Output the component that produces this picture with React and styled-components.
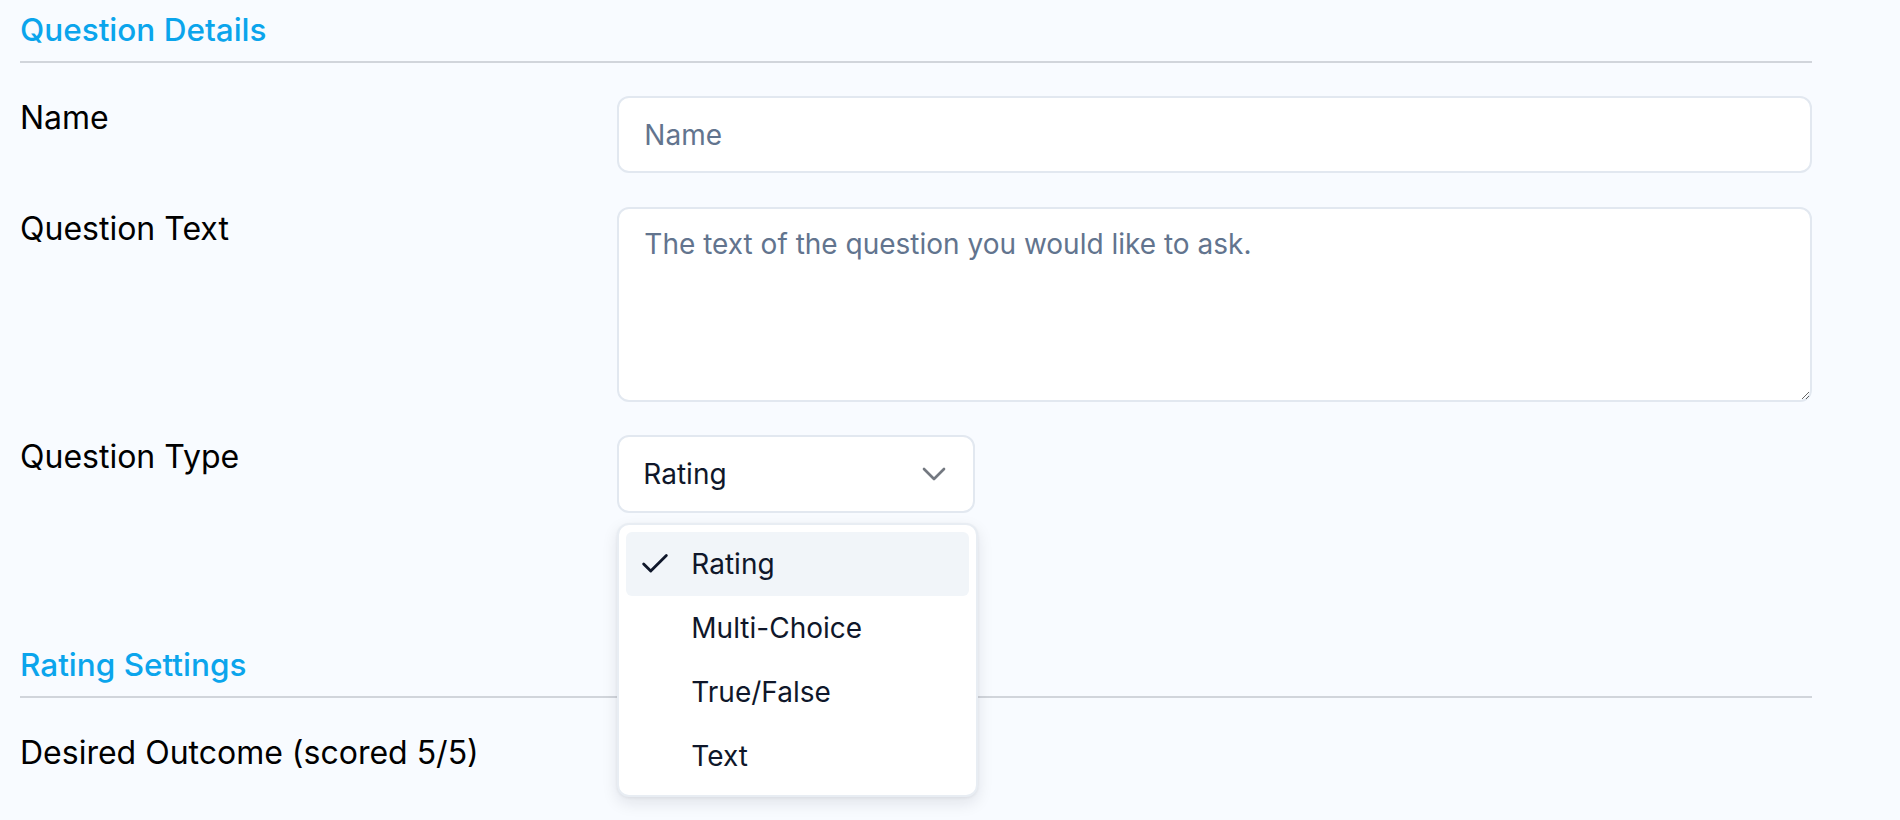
import React, { useState } from "react";
import styled, { createGlobalStyle } from "styled-components";
import { Check, ChevronDown } from "lucide-react";

const GlobalStyle = createGlobalStyle`
  html, body, #root {
    min-height: 100%;
  }
  body {
    margin: 0;
    min-height: 100vh;
    background-color: #f8fbff;
    font-family: Inter, "Noto Sans", sans-serif;
  }
`;

const Page = styled.div`
  width: 1792px;
  min-height: 820px;
  margin-left: 20px;
  display: flex;
  flex-direction: column;
`;

const Section = styled.section`
  display: flex;
  flex-direction: column;
  gap: 33px;
  margin-top: ${(props) => props.$offset || 0}px;
`;

const SectionTitle = styled.h2`
  margin: 0;
  padding: 6px 0 7px;
  font-size: 31.5px;
  line-height: 48px;
  font-weight: 500;
  color: #0ba5ec;
  border-bottom: 2px solid #d1d5db;
`;

const Rows = styled.div`
  display: flex;
  flex-direction: column;
  gap: 33.5px;
`;

const Row = styled.div`
  display: grid;
  grid-template-columns: 1fr 2fr;
  align-items: start;
`;

const Label = styled.label`
  font-size: 32px;
  line-height: 43px;
  color: #000;
`;

const TextInput = styled.input`
  box-sizing: border-box;
  width: 100%;
  height: 77px;
  padding: 0 25px;
  border: 2px solid #e2e8f0;
  border-radius: 12px;
  background: #fff;
  font-family: inherit;
  font-size: 28px;
  color: #0f172a;
  outline: none;

  &::placeholder {
    color: #62748e;
  }
`;

const TextArea = styled.textarea`
  box-sizing: border-box;
  width: 100%;
  height: 195px;
  padding: 14px 25px;
  border: 2px solid #e2e8f0;
  border-radius: 12px;
  background: #fff;
  font-family: inherit;
  font-size: 28px;
  line-height: 42px;
  color: #0f172a;
  outline: none;

  &::placeholder {
    color: #62748e;
  }
`;

const SelectWrap = styled.div`
  position: relative;
  width: 358px;
`;

const SelectButton = styled.button`
  box-sizing: border-box;
  width: 100%;
  height: 78px;
  display: flex;
  align-items: center;
  justify-content: space-between;
  padding: 0 19px 0 24px;
  border: 2px solid #e2e8f0;
  border-radius: 12px;
  background: #fff;
  font-family: inherit;
  font-size: 28px;
  color: #0f172a;
  cursor: pointer;

  svg {
    color: #737880;
  }
`;

const Menu = styled.ul`
  position: absolute;
  top: calc(100% + 10px);
  left: 0;
  box-sizing: border-box;
  width: 361px;
  margin: 0;
  padding: 7px;
  list-style: none;
  background: #fff;
  border: 2px solid #e8edf3;
  border-radius: 12px;
  box-shadow: 0 6px 16px rgba(15, 23, 42, 0.1), 0 1px 3px rgba(15, 23, 42, 0.06);
  z-index: 10;
`;

const MenuItem = styled.li`
  height: 64px;
  display: flex;
  align-items: center;
  gap: 19px;
  padding-left: 12px;
  border-radius: 6px;
  font-size: 28px;
  color: #0f172a;
  background: ${(props) => (props.$active ? "#f1f5f9" : "transparent")};
  cursor: pointer;
`;

const CheckSlot = styled.span`
  width: 34px;
  height: 34px;
  display: flex;
  align-items: center;
  justify-content: center;
  color: #0f172a;
`;

const types = ["Rating", "Multi-Choice", "True/False", "Text"];

const App = () => {
  const [type, setType] = useState("Rating");
  const [open, setOpen] = useState(true);

  return (
    <Page>
      <GlobalStyle />
      <Section>
        <SectionTitle>Question Details</SectionTitle>
        <Rows>
          <Row>
            <Label>Name</Label>
            <TextInput placeholder="Name" />
          </Row>
          <Row>
            <Label>Question Text</Label>
            <TextArea placeholder="The text of the question you would like to ask." />
          </Row>
          <Row>
            <Label>Question Type</Label>
            <SelectWrap>
              <SelectButton onClick={() => setOpen(!open)}>
                <span>{type}</span>
                <ChevronDown size={40} strokeWidth={1.6} />
              </SelectButton>
              {open && (
                <Menu>
                  {types.map((t) => (
                    <MenuItem
                      key={t}
                      $active={t === type}
                      onClick={() => {
                        setType(t);
                        setOpen(false);
                      }}
                    >
                      <CheckSlot>
                        {t === type && <Check size={34} strokeWidth={2} />}
                      </CheckSlot>
                      {t}
                    </MenuItem>
                  ))}
                </Menu>
              )}
            </SelectWrap>
          </Row>
        </Rows>
      </Section>
      <Section $offset={122}>
        <SectionTitle>Rating Settings</SectionTitle>
        <Rows>
          <Row>
            <Label>Desired Outcome (scored 5/5)</Label>
            <div />
          </Row>
        </Rows>
      </Section>
    </Page>
  );
};

export default App;
